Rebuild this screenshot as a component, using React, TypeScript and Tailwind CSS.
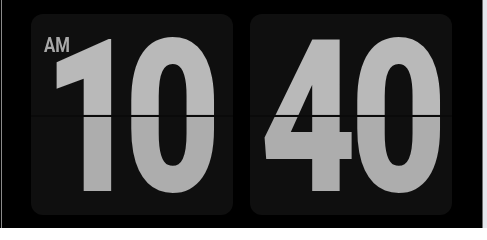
const Card = ({
  value,
  label,
  spacing,
}: {
  value: string;
  label?: string;
  spacing: string;
}) => {
  return (
    <div className="relative flex h-[201px] w-[202px] items-center justify-center overflow-hidden rounded-[12px] bg-[#0f0f0f]">
      {label && (
        <span className="absolute left-[13px] top-[22px] origin-left scale-x-[0.86] text-[19.5px] font-bold leading-none text-[#a8a8a8] [font-family:Roboto,'Liberation_Sans',sans-serif]">
          {label}
        </span>
      )}
      <span
        className={`flex h-full scale-x-[0.78] items-center bg-[linear-gradient(to_bottom,#b9b9b9_50%,#adadad_50%)] bg-clip-text pt-[6px] text-[214px] font-black leading-none text-transparent [font-family:Roboto,'Liberation_Sans',sans-serif] ${spacing}`}
      >
        {value}
      </span>
      <div className="absolute inset-x-0 top-[101px] h-[2px] bg-[#0a0a0a]" />
    </div>
  );
};

export default function App() {
  return (
    <div className="flex h-[228px] w-[487px] bg-black">
      <div className="ml-px w-px bg-[#8a8a8a]" />
      <div className="flex flex-1 items-start gap-[17px] pl-[29px] pt-[14px]">
        <Card value="10" label="AM" spacing="tracking-[-20px] pr-[20px]" />
        <Card value="40" spacing="tracking-[-8px] pr-[2px]" />
      </div>
      <div className="w-px bg-[#6f6f6f]" />
      <div className="w-[4px] bg-[#e4e6ec]" />
    </div>
  );
}
